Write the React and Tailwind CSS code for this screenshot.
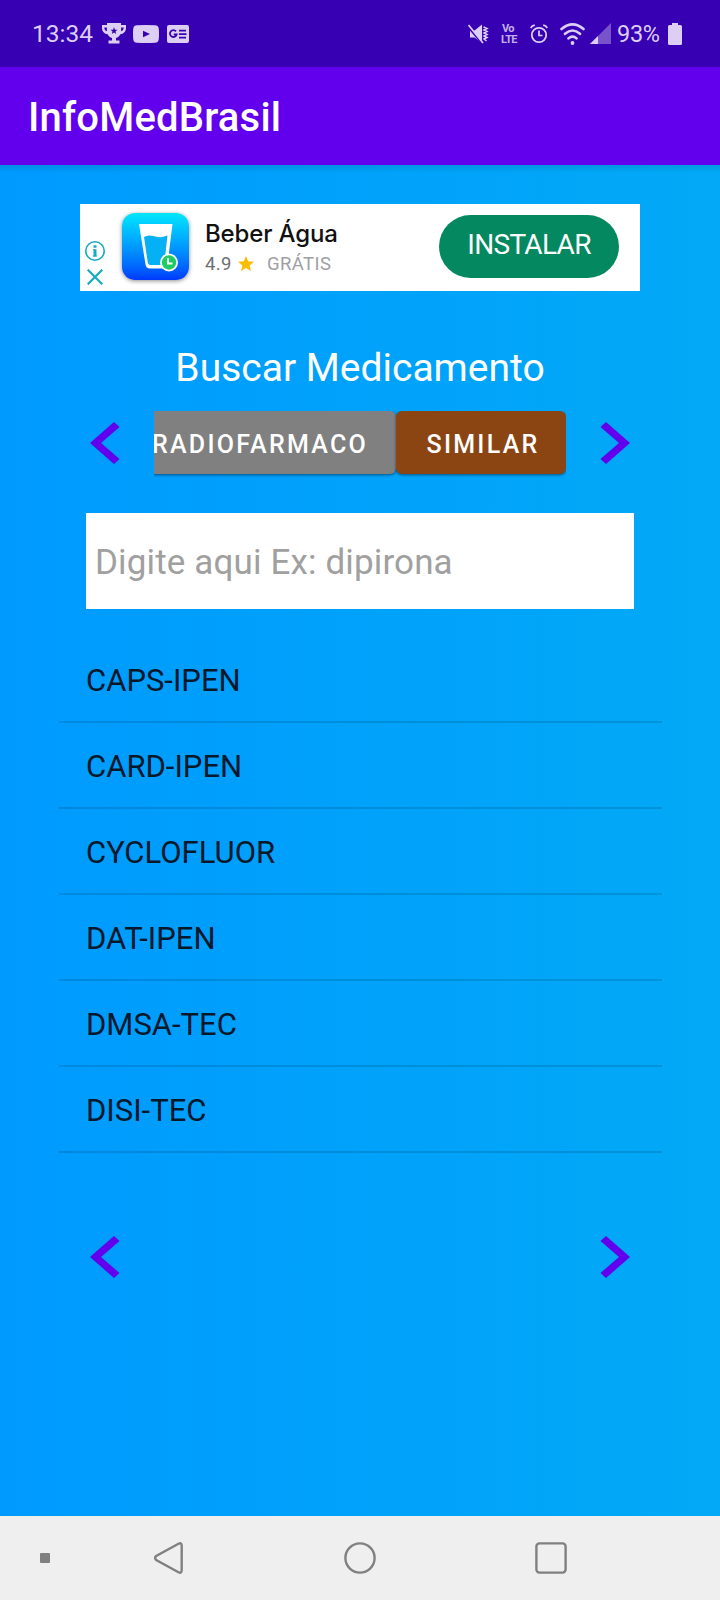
import React from "react";

const medicines = [
  "CAPS-IPEN",
  "CARD-IPEN",
  "CYCLOFLUOR",
  "DAT-IPEN",
  "DMSA-TEC",
  "DISI-TEC",
];

const Arrow = ({ right }) => (
  <svg
    className={right ? "block rotate-180" : "block"}
    width="30"
    height="42"
    viewBox="0 0 30 42"
    fill="#6200ee"
  >
    <path d="M0 21 L24 0 L29.5 5 L11 21 L29.5 37 L24 42 Z" />
  </svg>
);

const StatusBar = () => (
  <div className="h-[67px] bg-[#3700b3] text-[#dccff3] flex items-center justify-between pl-8 pr-[38px]">
    <div className="flex items-center">
      <span className="text-[24.5px] w-[70px] leading-7 pt-px">13:34</span>
      {/* Trophy */}
      <svg width="24" height="21" viewBox="0 0 24 21" fill="currentColor">
        <path
          fillRule="evenodd"
          d="M5 0 H19 V2 H24 V5 C24 8.5 21.5 11 18.4 11.2 C17.4 13.2 15.8 14.5 14 15 V17.5 H17.5 V20.5 H6.5 V17.5 H10 V15 C8.2 14.5 6.6 13.2 5.6 11.2 C2.5 11 0 8.5 0 5 V2 H5 Z M2.3 4.5 C2.3 6.5 3.3 7.8 4.9 8.3 V4.5 Z M21.7 4.5 H19.1 V8.3 C20.7 7.8 21.7 6.5 21.7 4.5 Z M12 4 L11.1 6.7 L8.5 6.8 L10.5 8.4 L9.8 11 L12 9.5 L14.2 11 L13.5 8.4 L15.5 6.8 L12.9 6.7 Z"
        />
      </svg>
      {/* Video */}
      <svg
        className="ml-[7px]"
        width="26"
        height="18"
        viewBox="0 0 26 18"
        fill="currentColor"
      >
        <path
          fillRule="evenodd"
          d="M4 0.3 Q13 -0.3 22 0.3 Q25.6 0.5 25.8 4 Q26.2 9 25.8 14 Q25.6 17.5 22 17.7 Q13 18.3 4 17.7 Q0.4 17.5 0.2 14 Q-0.2 9 0.2 4 Q0.4 0.5 4 0.3 Z M10 5.7 V12.3 L17 9 Z"
        />
      </svg>
      {/* News */}
      <svg className="ml-2" width="22" height="18" viewBox="0 0 22 18">
        <rect width="22" height="18" rx="2" fill="currentColor" />
        <path
          d="M9 6.4 A3.4 3.4 0 1 0 9.7 9.3 H6.8 M12 5.7 H19 M12 9.2 H19.5 M12 12.6 H19"
          fill="none"
          stroke="#3700b3"
          strokeWidth="1.8"
        />
      </svg>
    </div>
    <div className="flex items-center">
      {/* Muted, vibrating */}
      <svg width="21" height="20" viewBox="0 0 21 20">
        <path d="M2 6.5 H6.5 L14 0.5 V19 L6.5 13.5 H2 Z" fill="currentColor" />
        <path d="M-1 1.5 L14.5 20" stroke="#3700b3" strokeWidth="2" />
        <path d="M0.5 1 L15 19" stroke="currentColor" strokeWidth="1.7" />
        <path
          d="M15.5 3 L19 4.5 L16 6 L19 7.5 L16 9 L19 10.5 L16 12 L19 13.5 L16 15 L18.5 17"
          fill="none"
          stroke="currentColor"
          strokeWidth="1.5"
        />
      </svg>
      <div className="ml-3 w-4 flex flex-col text-[11px] leading-[11px] font-bold tracking-[-0.6px] opacity-85">
        <span className="pl-px">Vo</span>
        <span>LTE</span>
      </div>
      {/* Alarm */}
      <svg
        className="ml-[13px]"
        width="18"
        height="20"
        viewBox="0 0 18 20"
        fill="none"
        stroke="currentColor"
      >
        <circle cx="9" cy="11" r="7.2" strokeWidth="1.8" />
        <path
          d="M9 6.5 V11.5 H12.5 M0.7 4 Q2 1.8 4.8 1.2 M17.3 4 Q16 1.8 13.2 1.2"
          strokeWidth="1.7"
        />
      </svg>
      {/* Wifi */}
      <svg
        className="ml-3"
        width="25"
        height="22"
        viewBox="0 0 25 22"
        fill="none"
        stroke="currentColor"
        strokeWidth="2.6"
        strokeLinecap="round"
      >
        <path d="M1.5 6 Q12.5 -3.2 23.5 6 M5 10.8 Q12.5 4.2 20 10.8 M8.5 15.4 Q12.5 11.8 16.5 15.4" />
        <circle cx="12.5" cy="20" r="1.9" fill="currentColor" stroke="none" />
      </svg>
      {/* Signal */}
      <svg
        className="ml-[5px]"
        width="21"
        height="21"
        viewBox="0 0 21 21"
        fill="currentColor"
      >
        <path d="M21 0 V21 H0 Z" opacity="0.4" />
        <path d="M8 13 V21 H0 Z" />
      </svg>
      <span className="ml-1.5 w-[43px] text-[23.5px] leading-7 pt-px tracking-[-0.3px]">
        93%
      </span>
      <svg
        className="ml-2"
        width="14"
        height="22"
        viewBox="0 0 14 22"
        fill="currentColor"
      >
        <path d="M4 0 H10 V2 H12.5 Q14 2 14 3.5 V20.5 Q14 22 12.5 22 H1.5 Q0 22 0 20.5 V3.5 Q0 2 1.5 2 H4 Z" />
      </svg>
    </div>
  </div>
);

const AdBanner = () => (
  <div className="mx-auto w-[560px] h-[87px] bg-white flex">
    <div className="w-[42px] pl-[5px] pt-[37px] flex flex-col">
      <svg
        width="20"
        height="20"
        viewBox="0 0 20 20"
        fill="none"
        stroke="#1aa9bf"
      >
        <circle cx="10" cy="10" r="9.2" strokeWidth="1.6" />
        <path d="M10 4.3 V6.8 M10 8.3 V15.5" strokeWidth="3" />
        <path d="M8 8.8 H10 M7.8 15 H12.2" strokeWidth="1" />
      </svg>
      <svg
        className="mt-2 ml-0.5"
        width="16"
        height="16"
        viewBox="0 0 16 16"
        stroke="#1aa9bf"
        strokeWidth="2.2"
      >
        <path d="M0.7 0.7 L15.3 15.3 M15.3 0.7 L0.7 15.3" />
      </svg>
    </div>
    {/* App icon */}
    <div className="mt-[9px] w-[67px] h-[67px] rounded-[13px] overflow-hidden shadow-[0_1px_4px_rgba(0,0,0,0.45)] bg-linear-to-b from-[#04e6fb] to-[#0238fb]">
      <svg width="67" height="67" viewBox="0 0 67 67">
        <path
          d="M17 11 H50.5 L45.5 51.5 Q45 55.5 41 55.5 H28 Q24 55.5 23.5 51.5 Z"
          fill="#fff"
        />
        <path
          d="M22 24 Q26 21.5 31 23 Q38 25.5 45.5 22.5 L42.5 49 Q42.2 52 39.5 52 H28.5 Q26 52 25.7 49 Z"
          fill="#06b0f4"
        />
        <circle cx="47" cy="49.5" r="9" fill="#fff" />
        <circle cx="47" cy="49.5" r="7.2" fill="#1fcb62" />
        <path
          d="M46 45 V50.5 H50.5"
          fill="none"
          stroke="#fff"
          strokeWidth="1.8"
        />
      </svg>
    </div>
    <div className="ml-4 mt-[13px] w-[234px]">
      <div className="font-['Inter',sans-serif] font-medium text-[24px] leading-[34px] tracking-[-0.15px] text-[#111]">
        Beber Água
      </div>
      <div className="flex items-center text-[18.5px] leading-[26px]">
        <span className="w-[33px] text-[#6c7074] tracking-[0.3px]">4.9</span>
        <svg
          className="-mt-0.5"
          width="16"
          height="15"
          viewBox="0 0 16 15"
          fill="#fbbc04"
        >
          <path d="M8 0 L10.2 5.3 L16 5.7 L11.6 9.4 L13 15 L8 12 L3 15 L4.4 9.4 L0 5.7 L5.8 5.3 Z" />
        </svg>
        <span className="ml-[13px] text-[#9da0a4] tracking-[0.4px]">
          GRÁTIS
        </span>
      </div>
    </div>
    <button className="mt-[11px] w-[180px] h-[63px] rounded-full bg-[#04885f] text-white text-[28px] leading-7 pb-1 tracking-[-0.7px]">
      INSTALAR
    </button>
  </div>
);

const App = () => {
  return (
    <div className="w-[720px] h-[1600px] flex flex-col overflow-hidden font-['Roboto',sans-serif]">
      <StatusBar />
      <div className="h-[98px] bg-[#6200ee] text-white flex items-center pl-7 pt-[3px]">
        <h1 className="text-[40px] leading-[58px] font-medium tracking-[0.2px]">
          InfoMedBrasil
        </h1>
      </div>

      <div className="flex-1 bg-linear-to-r from-[#009aff] to-[#03a9f6]">
        <div className="h-[39px] bg-linear-to-b from-black/10 to-transparent to-20%"></div>
        <AdBanner />
        <h2 className="mt-[51px] h-[51px] leading-[52px] text-[39px] text-white text-center">
          Buscar Medicamento
        </h2>

        {/* Category buttons */}
        <div className="mt-[18px] h-[65px] flex items-start">
          <div className="w-[154px] pl-[90px] pt-[11px]">
            <Arrow />
          </div>
          <div className="w-[412px] h-[67px] overflow-hidden flex justify-end text-white font-medium text-[25px] tracking-[2.25px]">
            <button className="shrink-0 h-[63px] w-[272px] rounded-[6px] bg-[#808080] shadow-[0_1px_3px_rgba(0,0,0,0.5)] pt-[5px]">
              RADIOFARMACO
            </button>
            <button className="shrink-0 h-[63px] w-[170px] rounded-[6px] bg-[#8b4513] shadow-[0_1px_3px_rgba(0,0,0,0.5)] pt-[5px] pl-1">
              SIMILAR
            </button>
          </div>
          <div className="ml-[34px] pt-[11px]">
            <Arrow right />
          </div>
        </div>

        <input
          className="block mx-auto mt-[37px] w-[548px] h-24 bg-white pl-[9px] pt-0.5 text-[35px] tracking-[0.14px] placeholder:text-[#a0a0a0] outline-none"
          placeholder="Digite aqui Ex: dipirona"
        />

        <ul className="mt-7 ml-[59px] w-[603px] text-[31px] text-[#06182a]">
          {medicines.map((name) => (
            <li
              key={name}
              className="h-[86px] flex items-center pl-[27px] pt-[5px] border-b-2 border-black/12"
            >
              {name}
            </li>
          ))}
        </ul>

        <div className="mt-[83px] flex justify-between px-[90px]">
          <Arrow />
          <Arrow right />
        </div>
      </div>

      {/* Navigation bar */}
      <div className="h-[84px] bg-[#efefef] flex items-center pl-10">
        <div className="w-[10px] h-[10px] rounded-[1px] bg-[#808080]"></div>
        <svg
          className="ml-[104px]"
          width="30"
          height="32"
          viewBox="0 0 30 32"
          fill="none"
          stroke="#808080"
          strokeWidth="2.4"
        >
          <path d="M24.5 1.8 Q27.7 0 27.7 4 V28 Q27.7 32 24.5 30.2 L2.2 18 Q0 16 2.2 14 Z" />
        </svg>
        <svg
          className="ml-40"
          width="32"
          height="32"
          viewBox="0 0 32 32"
          fill="none"
          stroke="#808080"
          strokeWidth="2.4"
        >
          <circle cx="16" cy="16" r="14.6" />
        </svg>
        <svg
          className="ml-[159px]"
          width="32"
          height="32"
          viewBox="0 0 32 32"
          fill="none"
          stroke="#808080"
          strokeWidth="2.4"
        >
          <rect x="1.4" y="1.4" width="29.2" height="29.2" rx="3" />
        </svg>
      </div>
    </div>
  );
};

export default App;
